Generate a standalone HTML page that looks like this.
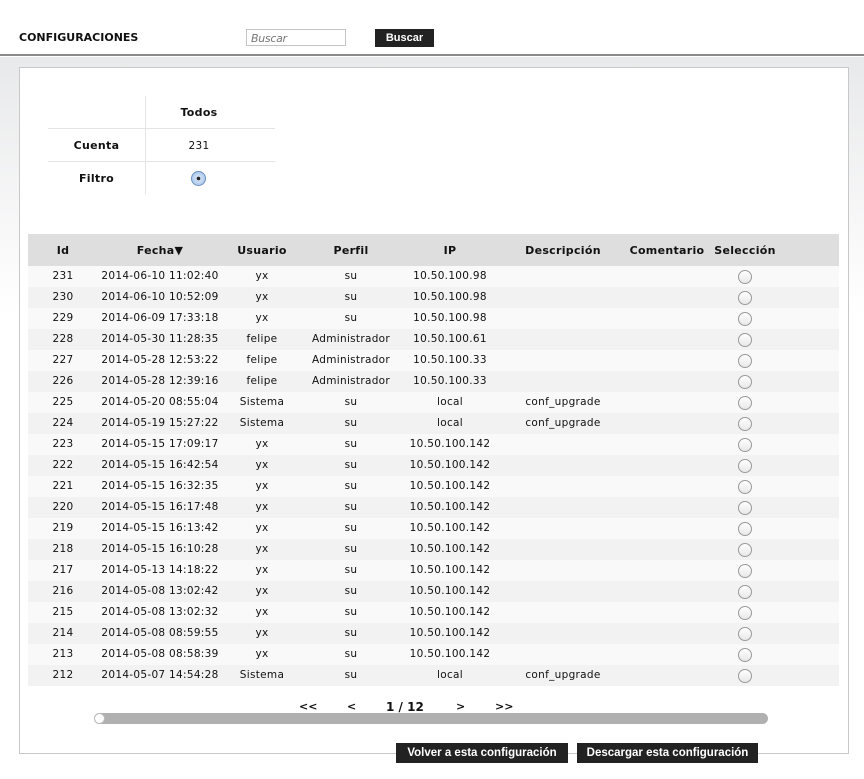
<!DOCTYPE html>
<html><head><meta charset="utf-8"><style>
*{margin:0;padding:0;box-sizing:border-box}
body{width:864px;height:779px;position:relative;font-family:"DejaVu Sans",Verdana,sans-serif;color:#111;background:#fff;overflow:hidden}
.a{position:absolute}
#hdr{left:0;top:0;width:864px;height:56px;background:#fff;border-bottom:2px solid #8a8a8a}
#bg{left:0;top:57px;width:864px;height:722px;background:linear-gradient(#e8e9ea 0,#f6f6f7 150px,#fff 260px)}
#panel{left:19px;top:67px;width:830px;height:687px;background:#fff;border:1px solid #c8c8c8}
.c{position:absolute;text-align:center;white-space:nowrap}
.btn{background:#222;color:#fff;font-family:"Liberation Sans",sans-serif;font-weight:bold;font-size:11.5px;text-align:center}
.radio{position:absolute;width:14px;height:14px;border-radius:50%;border:1px solid #9a9a9a;background:linear-gradient(#fff,#e8e8e8)}
.th{font-weight:bold;font-size:11px;letter-spacing:.3px}
.td{font-size:10.5px;letter-spacing:.3px}
</style></head><body>
<div id="hdr" class="a"></div>
<div class="a" style="left:19px;top:31px;font-weight:bold;font-size:11px;letter-spacing:0">CONFIGURACIONES</div>
<div class="a" style="left:246px;top:29px;width:100px;height:17px;border:1px solid #c4c4c4;font-style:italic;font-size:11px;color:#777;padding:2px 4px;font-family:'DejaVu Sans',sans-serif;letter-spacing:-.3px">Buscar</div>
<div class="a btn" style="left:375px;top:29px;width:59px;height:18px;line-height:18px;font-size:11px">Buscar</div>
<div id="bg" class="a"></div>
<div id="panel" class="a"></div>
<div class="a" style="left:145px;top:96px;width:1px;height:98px;background:#e4e4e4"></div>
<div class="a" style="left:48px;top:128px;width:227px;height:1px;background:#e4e4e4"></div>
<div class="a" style="left:48px;top:161px;width:227px;height:1px;background:#e4e4e4"></div>
<div class="c th" style="left:145px;width:108px;top:106px">Todos</div>
<div class="c th" style="left:48px;width:97px;top:139px">Cuenta</div>
<div class="c td" style="left:145px;width:108px;top:140px">231</div>
<div class="c th" style="left:48px;width:97px;top:172px">Filtro</div>
<div class="a" style="left:191px;top:171px;width:15px;height:15px;border-radius:50%;border:1px solid #6a8fbf;background:radial-gradient(circle,#222 0 1.6px,#cfe0f5 2px,#9fc0ea)"></div>
<div class="a" style="left:28px;top:234px;width:811px;height:32px;background:#dedede"></div>
<div class="c th" style="left:28px;width:70px;top:244px">Id</div>
<div class="c th" style="left:110px;width:100px;top:244px">Fecha▼</div>
<div class="c th" style="left:222px;width:80px;top:244px">Usuario</div>
<div class="c th" style="left:305px;width:92px;top:244px">Perfil</div>
<div class="c th" style="left:400px;width:100px;top:244px">IP</div>
<div class="c th" style="left:513px;width:100px;top:244px">Descripción</div>
<div class="c th" style="left:627px;width:80px;top:244px">Comentario</div>
<div class="c th" style="left:705px;width:80px;top:244px">Selección</div>
<div id="rows"></div>
<script>
var d=[[231,"2014-06-10 11:02:40","yx","su","10.50.100.98",""],[230,"2014-06-10 10:52:09","yx","su","10.50.100.98",""],[229,"2014-06-09 17:33:18","yx","su","10.50.100.98",""],[228,"2014-05-30 11:28:35","felipe","Administrador","10.50.100.61",""],[227,"2014-05-28 12:53:22","felipe","Administrador","10.50.100.33",""],[226,"2014-05-28 12:39:16","felipe","Administrador","10.50.100.33",""],[225,"2014-05-20 08:55:04","Sistema","su","local","conf_upgrade"],[224,"2014-05-19 15:27:22","Sistema","su","local","conf_upgrade"],[223,"2014-05-15 17:09:17","yx","su","10.50.100.142",""],[222,"2014-05-15 16:42:54","yx","su","10.50.100.142",""],[221,"2014-05-15 16:32:35","yx","su","10.50.100.142",""],[220,"2014-05-15 16:17:48","yx","su","10.50.100.142",""],[219,"2014-05-15 16:13:42","yx","su","10.50.100.142",""],[218,"2014-05-15 16:10:28","yx","su","10.50.100.142",""],[217,"2014-05-13 14:18:22","yx","su","10.50.100.142",""],[216,"2014-05-08 13:02:42","yx","su","10.50.100.142",""],[215,"2014-05-08 13:02:32","yx","su","10.50.100.142",""],[214,"2014-05-08 08:59:55","yx","su","10.50.100.142",""],[213,"2014-05-08 08:58:39","yx","su","10.50.100.142",""],[212,"2014-05-07 14:54:28","Sistema","su","local","conf_upgrade"]];
var cols=[[28,70],[100,120],[222,80],[305,92],[400,100],[513,100]],h="";
d.forEach(function(r,i){var t=266+i*21;h+='<div class="a" style="left:28px;top:'+t+'px;width:811px;height:21px;background:'+(i%2?'#f2f2f2':'#f9f9f9')+'"></div>';
r.forEach(function(v,j){h+='<div class="c td" style="left:'+cols[j][0]+'px;width:'+cols[j][1]+'px;top:'+(t+4)+'px">'+v+'</div>'});
h+='<div class="radio" style="left:738px;top:'+(t+4)+'px"></div>'});
document.getElementById("rows").innerHTML=h;
</script>
<div class="a" style="left:290px;top:700px;font-weight:bold;font-size:11px">
<span class="a" style="left:9px">&lt;&lt;</span><span class="a" style="left:57px">&lt;</span><span class="a" style="left:96px;font-size:12px;white-space:nowrap">1 / 12</span><span class="a" style="left:166px">&gt;</span><span class="a" style="left:205px">&gt;&gt;</span></div>
<div class="a" style="left:94px;top:713px;width:674px;height:11px;border-radius:6px;background:#b0b0b0"></div>
<div class="a" style="left:94px;top:713px;width:11px;height:11px;border-radius:50%;background:#fff;border:1px solid #bbb"></div>
<div class="a btn" style="left:396px;top:743px;width:172px;height:20px;line-height:20px">Volver a esta configuración</div>
<div class="a btn" style="left:577px;top:743px;width:181px;height:20px;line-height:20px">Descargar esta configuración</div>
</body></html>
